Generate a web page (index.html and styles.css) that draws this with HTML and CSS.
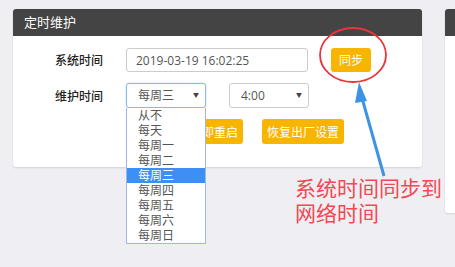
FILE: index.html
```html
<!DOCTYPE html>
<html lang="zh-CN">
<head>
    <meta charset="UTF-8">
    <title>定时维护</title>
    <link rel="stylesheet" href="styles.css">
</head>
<body>
    <div class="page">
        <div class="panel">
            <div class="panel-head">定时维护</div>
            <div class="panel-body">
                <div class="form-row">
                    <label class="form-label">系统时间</label>
                    <input class="form-input" type="text" value="2019-03-19 16:02:25">
                    <button class="btn btn-sync">同步</button>
                </div>
                <div class="form-row">
                    <label class="form-label">维护时间</label>
                    <div class="select-wrap">
                        <div class="select focused">每周三<span class="caret">▼</span></div>
                        <ul class="dropdown">
                            <li>从不</li>
                            <li>每天</li>
                            <li>每周一</li>
                            <li>每周二</li>
                            <li class="selected">每周三</li>
                            <li>每周四</li>
                            <li>每周五</li>
                            <li>每周六</li>
                            <li>每周日</li>
                        </ul>
                    </div>
                    <div class="select select-hour">4:00<span class="caret">▼</span></div>
                </div>
                <div class="form-row buttons">
                    <button class="btn btn-restart">立即重启</button>
                    <button class="btn">恢复出厂设置</button>
                </div>
            </div>
        </div>
        <div class="panel panel-side">
            <div class="panel-head"></div>
            <div class="panel-body"></div>
        </div>
    </div>

    <!-- annotation -->
    <svg class="mark" width="455" height="267" viewBox="0 0 455 267">
        <ellipse cx="353" cy="55" rx="33" ry="27" fill="none" stroke="#e8343a" stroke-width="1.8"/>
        <line x1="384" y1="176" x2="362" y2="98" stroke="#3e92e3" stroke-width="3"/>
        <polygon points="359,82 367,101 355,103" fill="#3e92e3"/>
    </svg>
    <div class="note">系统时间同步到<br>网络时间</div>
</body>
</html>
```

FILE: styles.css
```css
/* General */
body {
    margin: 0;
    padding: 0;
    background-color: #eeeef3;
    font-family: "Open Sans", "Noto Sans CJK SC", sans-serif;
    font-size: 12px;
    color: #333;
    overflow: hidden;
    width: 455px;
    height: 267px;
    position: relative;
}

.page {
    display: flex;
    gap: 23px;
    padding: 9px 0 0 13px;
}

/* Panels */
.panel {
    width: 409px;
    flex-shrink: 0;
    background: white;
    border-radius: 3px;
    box-shadow: 0 1px 2px rgba(0, 0, 0, 0.12);
    align-self: flex-start;
}

.panel-head {
    height: 27px;
    line-height: 27px;
    background-color: #444;
    color: white;
    font-size: 13px;
    padding-left: 11px;
    border-radius: 3px 3px 0 0;
}

.panel-body {
    padding: 12px 0 23px;
}

.panel-side {
    width: 10px;
    border-radius: 3px 0 0 3px;
}

.panel-side .panel-head {
    padding: 0;
    border-radius: 3px 0 0 0;
}

.panel-side .panel-body {
    height: 177px;
    padding: 0;
}

/* Form */
.form-row {
    display: flex;
    align-items: center;
    margin-bottom: 11px;
}

.form-row:last-child {
    margin-bottom: 0;
}

.form-label {
    width: 90px;
    text-align: right;
    margin-right: 23px;
    font-size: 12px;
    font-weight: 500;
    color: #222;
}

.form-input {
    width: 182px;
    height: 24px;
    box-sizing: border-box;
    border: 1px solid #ccc;
    border-radius: 3px;
    padding: 0 9px;
    font-family: inherit;
    font-size: 12px;
    color: #555;
    margin-right: 23px;
}

.select-wrap {
    position: relative;
    margin-right: 23px;
}

.select {
    width: 80px;
    height: 25px;
    box-sizing: border-box;
    border: 1px solid #ccc;
    border-radius: 3px;
    padding: 0 0 0 11px;
    line-height: 23px;
    color: #555;
    background: white;
    position: relative;
}

.select.focused {
    border-color: #8cb8ea;
    box-shadow: 0 0 2px rgba(102, 175, 233, 0.5);
}

.caret {
    position: absolute;
    right: 6px;
    top: 0;
    font-size: 6px;
    color: #444;
}

.select-hour {
    padding-left: 11px;
}

/* Dropdown list */
.dropdown {
    position: absolute;
    left: 0;
    top: 25px;
    width: 80px;
    box-sizing: border-box;
    margin: 0;
    padding: 0;
    list-style: none;
    background: white;
    border: 1px solid #9db8e4;
    border-top: none;
    z-index: 2;
}

.dropdown li {
    height: 15px;
    line-height: 15px;
    padding-left: 11px;
    color: #555;
    font-size: 12px;
}

.dropdown li.selected {
    background-color: #3c8ff4;
    color: white;
}

/* Buttons */
.btn {
    height: 25px;
    border: none;
    border-radius: 3px;
    background-color: #f8b500;
    color: white;
    font-family: inherit;
    font-size: 12px;
    padding: 0 5px;
    cursor: pointer;
}

.btn-sync {
    width: 40px;
    height: 24px;
}

.buttons {
    padding-left: 172px;
}

.btn-restart {
    width: 58px;
    margin-right: 19px;
}

/* Annotation */
.mark {
    position: absolute;
    left: 0;
    top: 0;
    z-index: 3;
}

.note {
    position: absolute;
    left: 295px;
    top: 175px;
    font-family: "Noto Sans CJK SC", sans-serif;
    font-size: 21px;
    line-height: 25px;
    color: #ee4a52;
    z-index: 3;
}
```
